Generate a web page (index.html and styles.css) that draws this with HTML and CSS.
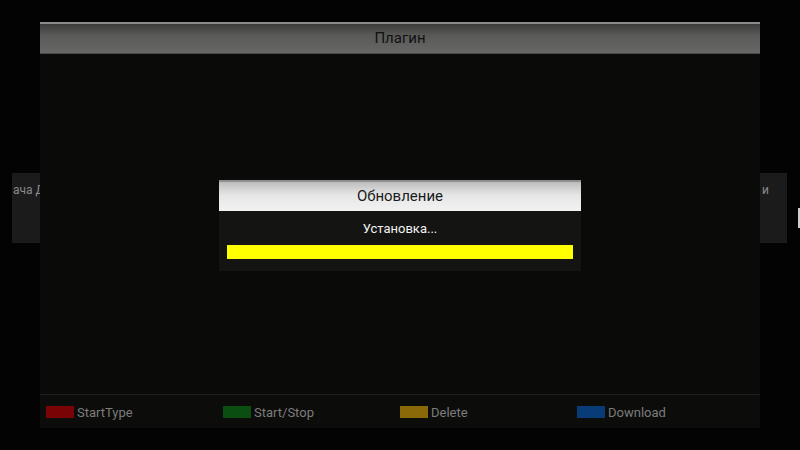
FILE: index.html
```html
<!DOCTYPE html>
<html lang="ru">
<head>
    <meta charset="UTF-8">
    <title>Плагин</title>
    <link rel="stylesheet" href="styles.css">
</head>
<body>
    <div class="screen">
        <div class="side side-left"><span>ача Д</span></div>
        <div class="side side-right"><span>и</span></div>
        <div class="edge"></div>

        <div class="panel">
            <div class="panel-header">Плагин</div>
            <div class="panel-body"></div>
            <div class="panel-footer">
                <div class="key"><span class="swatch red"></span>StartType</div>
                <div class="key"><span class="swatch green"></span>Start/Stop</div>
                <div class="key"><span class="swatch yellow"></span>Delete</div>
                <div class="key"><span class="swatch blue"></span>Download</div>
            </div>
        </div>

        <div class="dialog">
            <div class="dialog-header">Обновление</div>
            <div class="dialog-body">
                <div class="status">Установка...</div>
                <div class="progress"><div class="progress-fill" style="width: 100%"></div></div>
            </div>
        </div>
    </div>
</body>
</html>
```

FILE: styles.css
```css
:root {
    --screen-bg: #030303;
    --panel-bg: #0a0b09;
    --footer-bg: #0c0d0b;
    --side-bg: #1a1b1a;
    --key-text: #7c7c7c;
}
html, body {
    margin: 0;
    padding: 0;
}
body {
    font-family: Roboto, 'Noto Sans', sans-serif;
    background-color: var(--screen-bg);
    width: 800px;
    height: 450px;
    overflow: hidden;
}
.screen {
    position: relative;
    width: 800px;
    height: 450px;
    display: flex;
    justify-content: center;
    padding-top: 22px;
    box-sizing: border-box;
}

/* menu behind the plugin panel, clipped by the screen */
.side {
    position: absolute;
    top: 173px;
    height: 70px;
    background-color: var(--side-bg);
    color: #8a8a8a;
    font-size: 12px;
    overflow: hidden;
    white-space: nowrap;
}
.side span {
    display: block;
    margin-top: 10px;
}
.side-left {
    left: 12px;
    width: 28px;
}
.side-left span {
    margin-left: 1px;
}
.side-right {
    left: 760px;
    width: 27px;
}
.side-right span {
    margin-left: 2px;
}
.edge {
    position: absolute;
    left: 798px;
    top: 208px;
    width: 2px;
    height: 20px;
    background-color: #cfcfcf;
}

.panel {
    position: relative;
    width: 720px;
    height: 406px;
    background-color: var(--panel-bg);
    display: flex;
    flex-direction: column;
}
.panel-header {
    height: 32px;
    box-sizing: border-box;
    border-top: 2px solid #8a8b89;
    background: linear-gradient(#3c3d3b, #5a5b59 40%, #676866);
    border-bottom: 1px solid #4a4b49;
    color: #111;
    font-size: 15px;
    line-height: 29px;
    text-align: center;
}
.panel-body {
    flex: 1;
}
.panel-footer {
    height: 33px;
    border-top: 1px solid #1f201e;
    background-color: var(--footer-bg);
    display: grid;
    grid-template-columns: repeat(4, 177px);
    padding-left: 6px;
    align-items: center;
}
.key {
    display: flex;
    align-items: center;
    color: var(--key-text);
    font-size: 13px;
    padding-top: 1px;
}
.swatch {
    width: 28px;
    height: 12px;
    margin-right: 3px;
}
.red { background-color: #7a0306; }
.green { background-color: #0a4e12; }
.yellow { background-color: #8a6a08; }
.blue { background-color: #073c78; }

.dialog {
    position: absolute;
    left: 219px;
    top: 180px;
    width: 362px;
    background-color: #141413;
}
.dialog-header {
    height: 31px;
    box-sizing: border-box;
    border-top: 2px solid #8f8f8f;
    background: linear-gradient(#bdbdbd, #e6e6e6 45%, #f2f2f2);
    color: #1a1a1a;
    font-size: 15px;
    line-height: 29px;
    text-align: center;
}
.dialog-body {
    padding: 9px 8px 12px;
}
.status {
    color: #f2f2f2;
    font-size: 13px;
    text-align: center;
    line-height: 18px;
    margin-bottom: 7px;
}
.progress {
    height: 14px;
    background-color: #222;
}
.progress-fill {
    height: 100%;
    background-color: #ffff00;
}
```
